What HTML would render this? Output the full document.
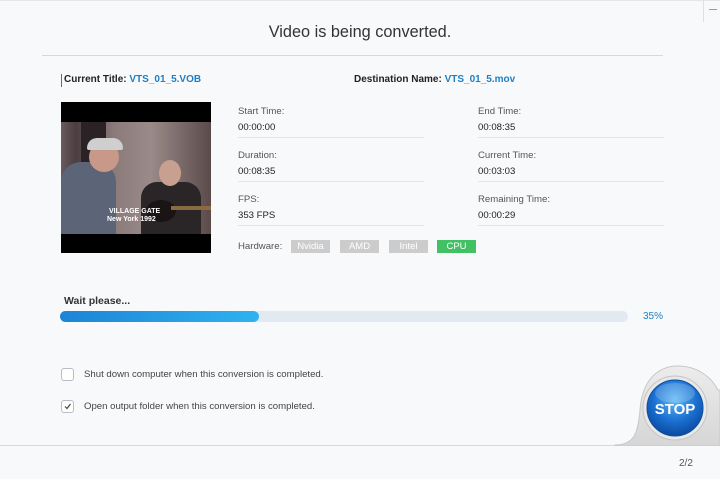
<!DOCTYPE html>
<html><head><meta charset="utf-8"><style>
*{margin:0;padding:0;box-sizing:border-box}
body{width:720px;height:479px;background:#f8f9fb;font-family:"Liberation Sans",sans-serif;position:relative;overflow:hidden;color:#333}
.a{position:absolute;white-space:nowrap}
.lbl{font-size:9.6px;color:#555}
.val{font-size:9.6px;color:#222}
.sep{position:absolute;height:1px;background:#e3e5e8}
.hw{position:absolute;top:240px;height:13px;font-size:9.5px;color:#fff;text-align:center;line-height:13px;background:#ccc}
.blue{color:#1f7fc4}
.cb{position:absolute;left:61px;width:13px;height:13px;border:1px solid #b9bcc2;border-radius:3px;background:#fff}
</style></head><body>
<div class="a" style="left:0;top:0;width:720px;height:1px;background:#e6e6e6"></div>
<div class="a" style="left:703px;top:0;width:1px;height:22px;background:#e0e0e0"></div>
<div class="a" style="left:709px;top:9px;width:8px;height:1px;background:#999"></div>
<div class="a" style="left:0;top:23px;width:720px;text-align:center;font-size:16.3px;color:#333">Video is being converted.</div>
<div class="a" style="left:42px;top:55px;width:621px;height:1px;background:#d6d8db"></div>

<div class="a" style="left:61px;top:74px;width:1px;height:13px;background:#1f7fc4"></div>
<div class="a" style="left:64px;top:74px;font-size:10px;font-weight:bold;color:#222">Current Title: <span class="blue">VTS_01_5.VOB</span></div>
<div class="a" style="left:354px;top:74px;font-size:10px;font-weight:bold;color:#222">Destination Name: <span class="blue">VTS_01_5.mov</span></div>

<div class="a" style="left:61px;top:102px;width:150px;height:151px;background:#000;overflow:hidden">
 <div class="a" style="left:0;top:20px;width:150px;height:112px;background:linear-gradient(90deg,#6a5a5c 0,#4a3e40 10%,#8a7a7a 35%,#9a8a88 60%,#7a6a6a 80%,#5a4a4a 100%)"></div>
 <div class="a" style="left:20px;top:20px;width:25px;height:70px;background:#2a2224"></div>
 <div class="a" style="left:0;top:60px;width:55px;height:72px;background:#5c6478;border-radius:20px 20px 0 0"></div>
 <div class="a" style="left:28px;top:40px;width:30px;height:30px;background:#c89888;border-radius:50%"></div>
 <div class="a" style="left:26px;top:36px;width:36px;height:12px;background:#cfcfcf;border-radius:10px 10px 2px 2px"></div>
 <div class="a" style="left:80px;top:80px;width:60px;height:52px;background:#2a2628;border-radius:16px 16px 0 0"></div>
 <div class="a" style="left:98px;top:58px;width:22px;height:26px;background:#c8a090;border-radius:50%"></div>
 <div class="a" style="left:85px;top:98px;width:30px;height:22px;background:#1a1414;border-radius:50%"></div>
 <div class="a" style="left:110px;top:104px;width:40px;height:4px;background:#8a6a40"></div>
 <div class="a" style="left:48px;top:106px;font-size:7px;font-weight:bold;color:#fff">VILLAGE GATE</div>
 <div class="a" style="left:46px;top:114px;font-size:7px;font-weight:bold;color:#fff">New York 1992</div>
</div>

<div class="a lbl" style="left:238px;top:106px">Start Time:</div>
<div class="a val" style="left:238px;top:122px">00:00:00</div>
<div class="sep" style="left:238px;top:137px;width:186px"></div>
<div class="a lbl" style="left:238px;top:150px">Duration:</div>
<div class="a val" style="left:238px;top:166px">00:08:35</div>
<div class="sep" style="left:238px;top:181px;width:186px"></div>
<div class="a lbl" style="left:238px;top:194px">FPS:</div>
<div class="a val" style="left:238px;top:210px">353 FPS</div>
<div class="sep" style="left:238px;top:225px;width:186px"></div>

<div class="a lbl" style="left:478px;top:106px">End Time:</div>
<div class="a val" style="left:478px;top:122px">00:08:35</div>
<div class="sep" style="left:478px;top:137px;width:186px"></div>
<div class="a lbl" style="left:478px;top:150px">Current Time:</div>
<div class="a val" style="left:478px;top:166px">00:03:03</div>
<div class="sep" style="left:478px;top:181px;width:186px"></div>
<div class="a lbl" style="left:478px;top:194px">Remaining Time:</div>
<div class="a val" style="left:478px;top:210px">00:00:29</div>
<div class="sep" style="left:478px;top:225px;width:186px"></div>

<div class="a lbl" style="left:238px;top:241px">Hardware:</div>
<div class="hw" style="left:291px;width:39px">Nvidia</div>
<div class="hw" style="left:340px;width:39px">AMD</div>
<div class="hw" style="left:389px;width:39px">Intel</div>
<div class="hw" style="left:437px;width:39px;background:#43c064">CPU</div>

<div class="a" style="left:64px;top:295px;font-size:10.5px;font-weight:bold;color:#333">Wait please...</div>
<div class="a" style="left:60px;top:311px;width:568px;height:11px;border-radius:6px;background:#e3e9f1"></div>
<div class="a" style="left:60px;top:311px;width:199px;height:11px;border-radius:6px;background:linear-gradient(90deg,#1d84d6,#2fb2f0)"></div>
<div class="a" style="left:643px;top:311px;font-size:10px;color:#1f7fc4">35%</div>

<div class="cb" style="top:368px"></div>
<div class="a lbl" style="left:84px;top:369px;color:#444">Shut down computer when this conversion is completed.</div>
<div class="cb" style="top:400px"><svg width="11" height="11" viewBox="0 0 11 11" style="position:absolute;left:0;top:0"><path d="M3 5.5L5 7.5L8.5 3" fill="none" stroke="#444" stroke-width="1.2"/></svg></div>
<div class="a lbl" style="left:84px;top:401px;color:#444">Open output folder when this conversion is completed.</div>

<div class="a" style="left:0;top:445px;width:720px;height:1px;background:#d6d8db"></div>
<div class="a" style="left:679px;top:458px;font-size:10px;color:#555">2/2</div>

<svg class="a" style="left:600px;top:360px" width="120" height="86" viewBox="0 0 120 86">
 <defs>
  <radialGradient id="g" cx="50%" cy="35%" r="65%"><stop offset="0" stop-color="#5fb8f5"/><stop offset="0.6" stop-color="#1a6fd0"/><stop offset="1" stop-color="#0b4aa0"/></radialGradient>
  <linearGradient id="t" x1="0" y1="0" x2="0" y2="1"><stop offset="0" stop-color="#ececec"/><stop offset="1" stop-color="#d6d6d6"/></linearGradient>
 </defs>
 <path d="M15 85 C35 85 38 72 40 50 C42 20 58 6 78 6 C98 6 112 18 118 30 L120 30 L120 86 L15 86Z" fill="url(#t)" stroke="#c8c8c8"/>
 <circle cx="75" cy="48" r="32" fill="#e8e8e8" stroke="#c4c4c4"/>
 <circle cx="75" cy="48" r="28" fill="url(#g)" stroke="#0d4f9e"/>
 <ellipse cx="75" cy="33" rx="20" ry="10" fill="#ffffff" opacity="0.18"/>
 <text x="75" y="54" text-anchor="middle" font-family="Liberation Sans" font-weight="bold" font-size="15" fill="#fff">STOP</text>
</svg>
</body></html>
